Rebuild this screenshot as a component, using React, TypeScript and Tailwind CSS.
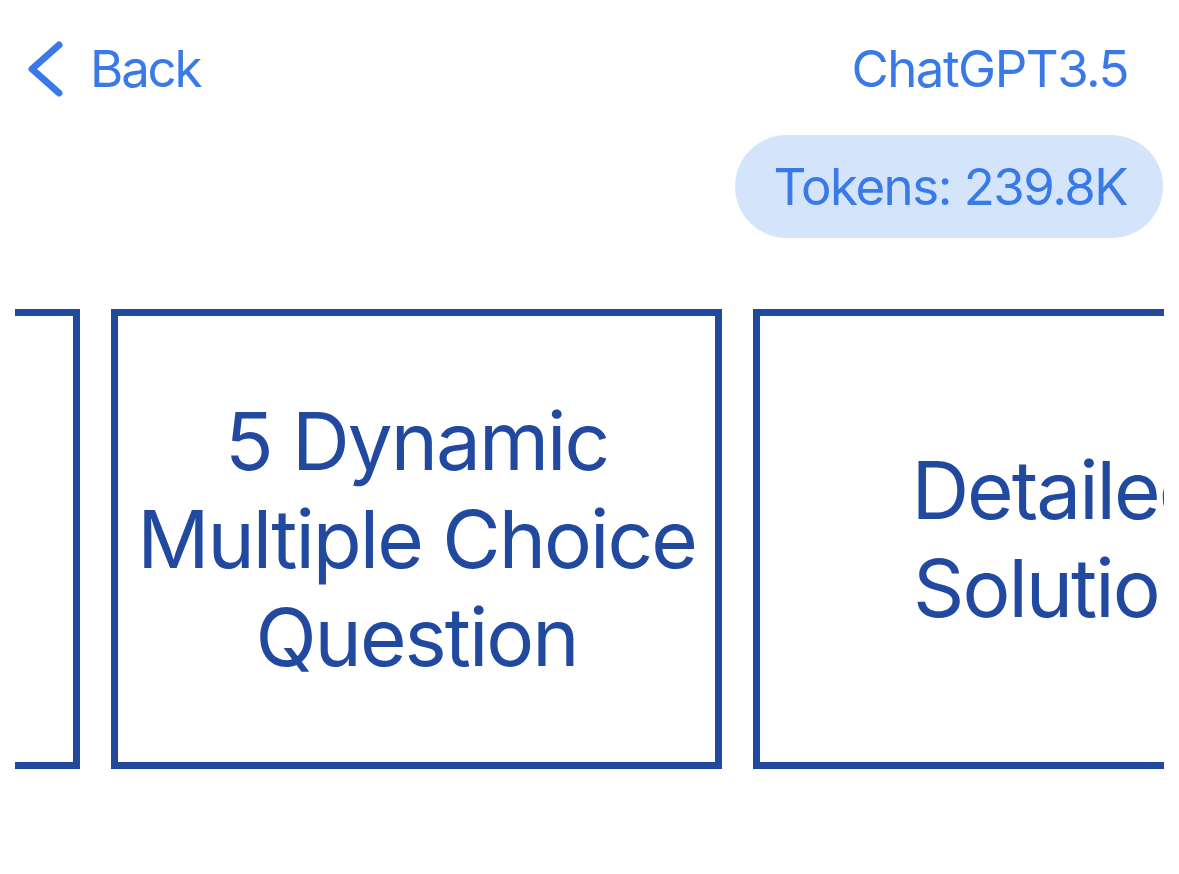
import React from "react";

const cards = [
  { id: 1, lines: [] as string[] },
  { id: 2, lines: ["5 Dynamic", "Multiple Choice", "Question"] },
  { id: 3, lines: ["Detailed", "Solution"] },
];

function Chevron() {
  return (
    <svg width="40" height="60" viewBox="0 0 40 60" className="shrink-0">
      <polyline
        points="33,7 6,31 33,55"
        fill="none"
        stroke="#3a7ae8"
        strokeWidth="7"
        strokeLinecap="round"
        strokeLinejoin="round"
      />
    </svg>
  );
}

export default function App() {
  return (
    <div
      className="w-[1179px] h-[874px] bg-white overflow-hidden"
      style={{ fontFamily: "Inter, 'Noto Sans', sans-serif" }}
    >
      <div className="flex items-center justify-between pl-[26px] pr-[51px] pt-[38px] h-[98px]">
        <button className="flex items-center gap-[24px] text-[#3a7ae8] text-[51px] leading-none tracking-[-2.2px]">
          <Chevron />
          <span>Back</span>
        </button>
        <span className="text-[#3a7ae8] text-[51px] leading-none tracking-[-1.5px]">ChatGPT3.5</span>
      </div>

      <div className="flex justify-end pr-[16px] mt-[37px]">
        <div className="h-[103px] pl-[39px] pr-[36px] rounded-full bg-[#d3e4fb] flex items-center text-[#3a7ae8] text-[51px] leading-none tracking-[-1.5px]">
          Tokens: 239.8K
        </div>
      </div>

      <div className="mx-[15px] mt-[71px] overflow-hidden">
        <div className="flex gap-[31px] ml-[-546px]">
          {cards.map((c) => (
            <div
              key={c.id}
              className="w-[611px] h-[460px] shrink-0 border-[7px] border-[#2149a0] flex flex-col items-center justify-center text-[#2149a0] text-[80px] leading-[98px] tracking-[-2px]"
            >
              {c.lines.map((l) => (
                <span key={l} className="whitespace-nowrap">
                  {l}
                </span>
              ))}
            </div>
          ))}
        </div>
      </div>
    </div>
  );
}
